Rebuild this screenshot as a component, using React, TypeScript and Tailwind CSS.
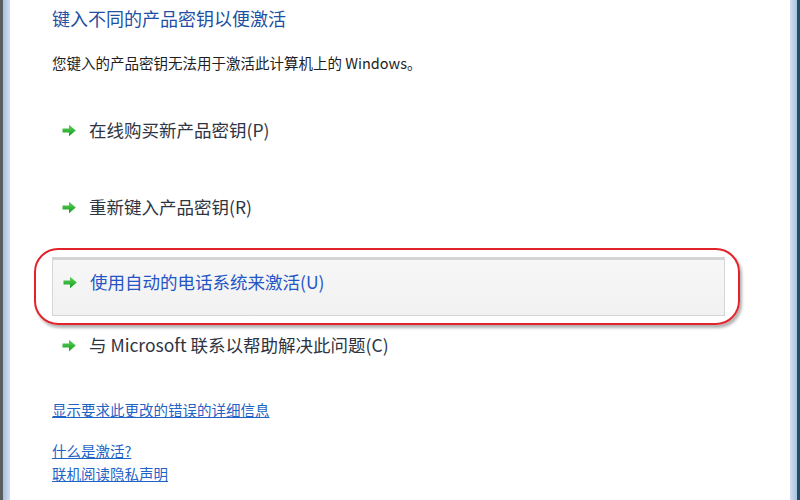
import React from "react";

const FONT = '"Noto Sans CJK SC", "Open Sans", "Liberation Sans", sans-serif';

function Arrow() {
  return (
    <svg width="15" height="13" viewBox="0 0 15 13" className="shrink-0">
      <defs>
        <linearGradient id="ag" x1="0" y1="0" x2="0" y2="1">
          <stop offset="0" stopColor="#5fd35a" />
          <stop offset="1" stopColor="#159a1f" />
        </linearGradient>
      </defs>
      <polygon points="0.5,4.5 7,4.5 7,0.8 13.8,6.5 7,12.2 7,8.5 0.5,8.5" fill="url(#ag)" />
    </svg>
  );
}

function CommandRow({ text, highlight }: { text: string; highlight?: boolean }) {
  return (
    <div className="flex items-center h-[24px] pl-[10px] gap-[12px]">
      <Arrow />
      <span
        className={
          "text-[17.5px] leading-[24px] whitespace-nowrap " +
          (highlight ? "text-[#2455c6]" : "text-[#2e3442]")
        }
      >
        {text}
      </span>
    </div>
  );
}

export default function App() {
  return (
    <div className="w-[800px] h-[500px] flex bg-white overflow-hidden" style={{ fontFamily: FONT }}>
      <div className="w-[3px] h-full bg-[#5a5d60]" />
      <div className="w-[7px] h-full bg-gradient-to-r from-[#a9bfdc] to-[#d3e0f0]" />
      <div className="flex-1 flex flex-col pl-[42px] pt-[6px]">
        <div className="text-[18px] leading-[24px] text-[#2150a4] whitespace-nowrap">键入不同的产品密钥以便激活</div>
        <div className="mt-[23px] text-[14.5px] leading-[20px] text-[#1e1e1e] whitespace-nowrap">
          您键入的产品密钥无法用于激活此计算机上的 Windows。
        </div>
        <div className="mt-[45px]">
          <CommandRow text="在线购买新产品密钥(P)" />
        </div>
        <div className="mt-[53px]">
          <CommandRow text="重新键入产品密钥(R)" />
        </div>
        <div className="relative mt-[38px] w-[673px]">
          <div className="h-[59px] border border-[#d6d6d6] border-t-[3px] border-t-[#d4d4d4] bg-gradient-to-b from-[#f7f7f7] to-[#f1f1f1] pt-[10px]">
            <CommandRow text="使用自动的电话系统来激活(U)" highlight />
          </div>
          <div className="absolute left-[-18px] top-[-9px] w-[706px] h-[77px] rounded-[24px] border-2 border-[#e3232c] shadow-[2px_3px_3px_rgba(0,0,0,0.3)]" />
        </div>
        <div className="mt-[17px]">
          <CommandRow text="与 Microsoft 联系以帮助解决此问题(C)" />
        </div>
        <div className="mt-[41px] text-[14.5px] leading-[23px] text-[#1f63c6] underline whitespace-nowrap">
          显示要求此更改的错误的详细信息
        </div>
        <div className="mt-[18px] text-[14.5px] leading-[23px] text-[#1f63c6] underline whitespace-nowrap">什么是激活?</div>
        <div className="text-[14.5px] leading-[23px] text-[#1f63c6] underline whitespace-nowrap">联机阅读隐私声明</div>
      </div>
      <div className="w-[7px] h-full bg-gradient-to-r from-[#d3e0f0] to-[#a9c2e0]" />
      <div className="w-[3px] h-full bg-[#1f4f63]" />
    </div>
  );
}
